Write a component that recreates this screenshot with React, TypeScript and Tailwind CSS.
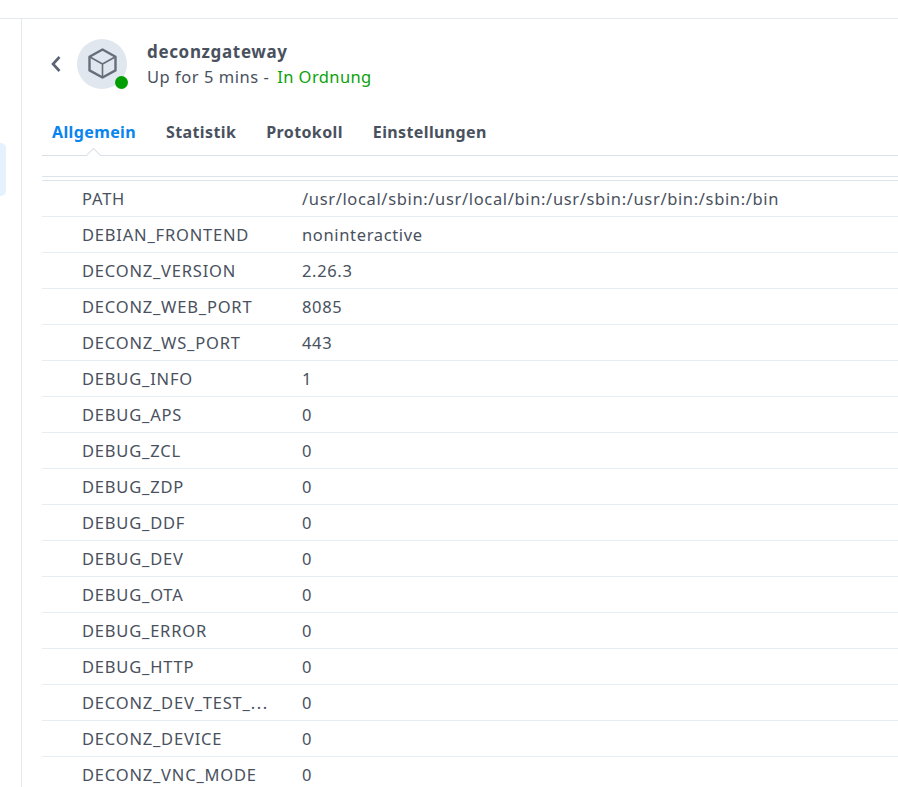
import React from 'react';

const rows: [string, string][] = [
  ['PATH', '/usr/local/sbin:/usr/local/bin:/usr/sbin:/usr/bin:/sbin:/bin'],
  ['DEBIAN_FRONTEND', 'noninteractive'],
  ['DECONZ_VERSION', '2.26.3'],
  ['DECONZ_WEB_PORT', '8085'],
  ['DECONZ_WS_PORT', '443'],
  ['DEBUG_INFO', '1'],
  ['DEBUG_APS', '0'],
  ['DEBUG_ZCL', '0'],
  ['DEBUG_ZDP', '0'],
  ['DEBUG_DDF', '0'],
  ['DEBUG_DEV', '0'],
  ['DEBUG_OTA', '0'],
  ['DEBUG_ERROR', '0'],
  ['DEBUG_HTTP', '0'],
  ['DECONZ_DEV_TEST_', '0'],
  ['DECONZ_DEVICE', '0'],
  ['DECONZ_VNC_MODE', '0'],
];

const tabs = ['Allgemein', 'Statistik', 'Protokoll', 'Einstellungen'];

export default function App() {
  return (
    <div className="h-[787px] w-[898px] overflow-hidden bg-white pt-[18px] font-['Noto_Sans',sans-serif] text-[#49515e]">
      <div className="flex h-[769px] border-t border-[#e3e9f0]">
        {/* left sidebar sliver */}
        <div className="w-[22px] shrink-0 border-r border-[#e3e9f0] pt-[124px]">
          <div className="h-[53px] w-[6px] rounded-r-[5px] bg-[#e5f1fd]" />
        </div>

        <div className="min-w-0 flex-1 pl-5">
          {/* header */}
          <div className="flex h-[96px] items-start pt-5">
            <div className="flex h-[50px] w-[35px] items-center pl-[7px]">
              <svg width="14" height="18" viewBox="0 0 14 18" fill="none" stroke="#5b6472" strokeWidth="2.6">
                <path d="M10.5 2 L4 9 L10.5 16" />
              </svg>
            </div>
            <div className="relative h-[50px] w-[50px] shrink-0 rounded-full bg-[#e1e7ee]">
              <svg className="absolute left-[11px] top-[9px]" width="29" height="31" viewBox="0 0 29 31" fill="none" stroke="#666e7a" strokeWidth="2.4" strokeLinejoin="round">
                <path d="M14.5 1.5 L27.5 8.8 V22.4 L14.5 29.5 L1.5 22.4 V8.8 Z" />
                <path d="M1.5 8.8 L14.5 16 L27.5 8.8 M14.5 16 V29.5" strokeWidth="1.6" />
              </svg>
              <div className="absolute left-[38px] top-[37px] h-[13px] w-[13px] rounded-full bg-[#009e00]" />
            </div>
            <div className="ml-5">
              <div className="text-[17px] font-bold leading-[25px] tracking-[0.65px]">deconzgateway</div>
              <div className="text-[16.5px] leading-[26px] tracking-[0.54px]">
                Up for 5 mins - <span className="ml-[3px] tracking-[0.4px] text-[#0aa20a]">In Ordnung</span>
              </div>
            </div>
          </div>

          {/* tabs */}
          <div className="relative flex h-[41px] gap-[30px] border-b border-[#d9e0e8] pl-[10px] text-[16px] font-bold leading-[34px] tracking-[0.38px]">
            {tabs.map((t, i) => (
              <span key={t} className={i === 0 ? 'text-[#0a84ee]' : ''}>{t}</span>
            ))}
            <div className="absolute left-[46px] top-[35px] h-[11px] w-[11px] rotate-45 border-l border-t border-[#d9e0e8] bg-white" />
          </div>

          <div className="mt-5 h-[5px] border-y border-[#dbe5ee]" />

          {/* variables */}
          <div>
            {rows.map(([k, v]) => (
              <div key={k} className="flex h-[36px] items-center border-b border-[#e8edf3] pt-[2px] text-[16.5px] tracking-[0.65px]">
                <div className="w-[260px] shrink-0 whitespace-nowrap pl-10 tracking-[0.8px]">
                  {k}
                  {k === 'DECONZ_DEV_TEST_' && <span className="tracking-[1.6px]">...</span>}
                </div>
                <div>{v}</div>
              </div>
            ))}
          </div>
        </div>
      </div>
    </div>
  );
}
